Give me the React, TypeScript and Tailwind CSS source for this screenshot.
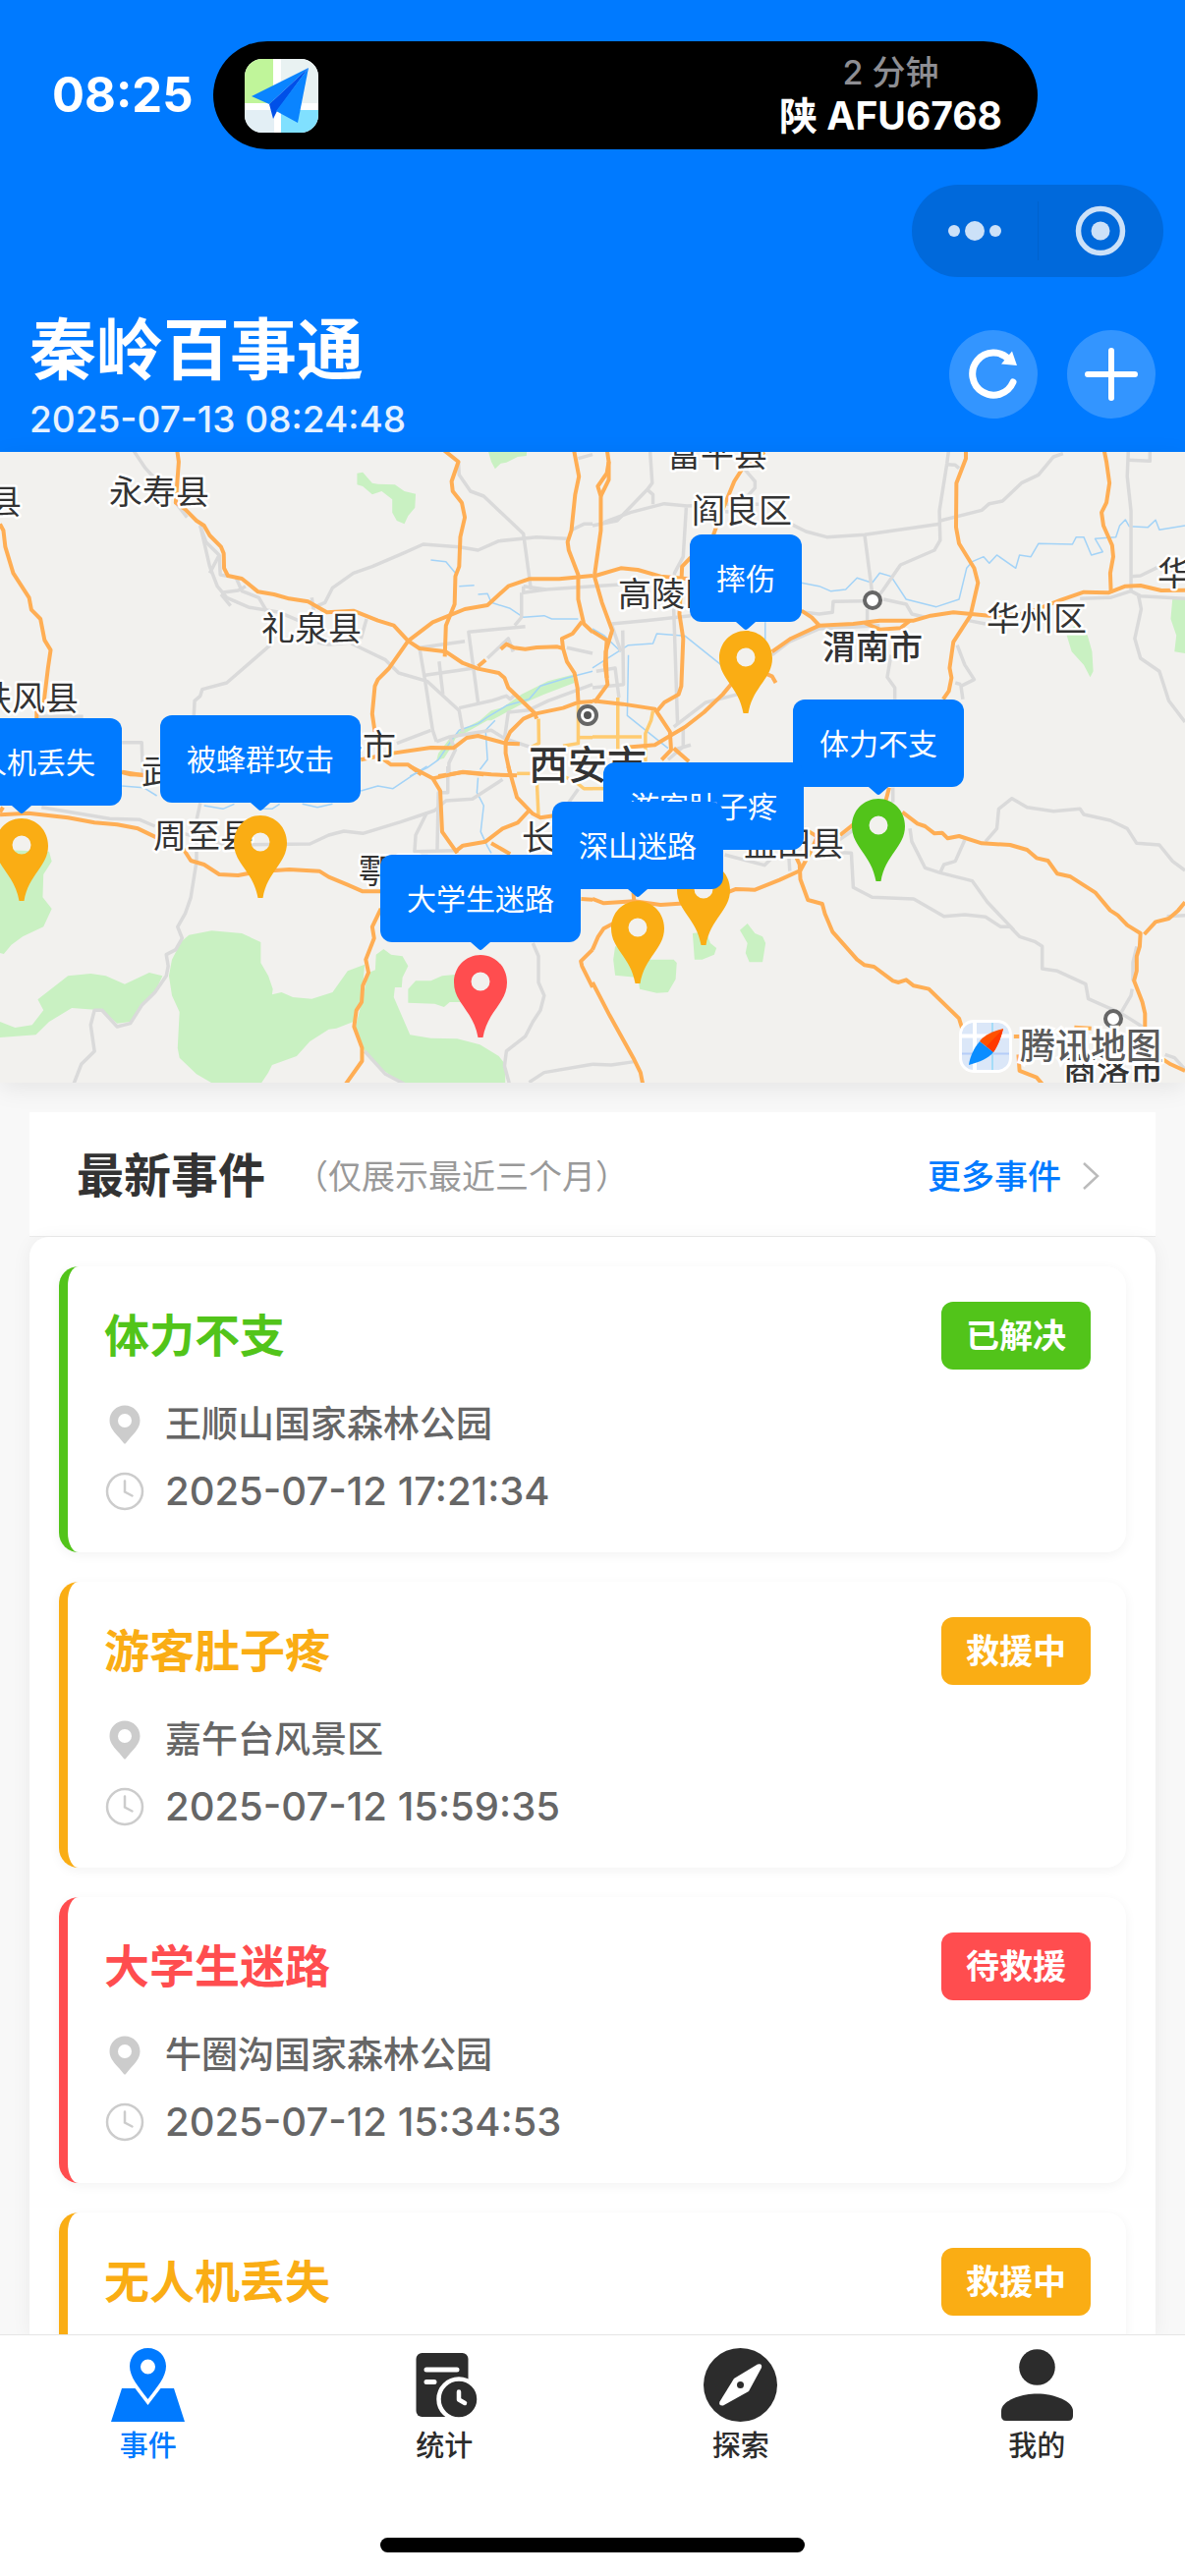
import { useState } from 'react';
import type { ReactNode } from 'react';

type Status = 'solved' | 'rescuing' | 'waiting';

interface RescueEvent {
    title: string;
    place: string;
    time: string;
    status: Status;
}

interface Marker {
    title: string;
    x: number;
    y: number;
    gap: number;
    color: string;
}

interface Tile {
    x: number;
    y: number;
    parks: string[];
    water: string[];
    minor: string[];
    streets: string[];
    highways: string[];
}

const STATUS: Record<Status, { label: string; text: string; bg: string; border: string }> = {
    solved: { label: '已解决', text: 'text-[#52c41a]', bg: 'bg-[#52c41a]', border: 'border-[#52c41a]' },
    rescuing: { label: '救援中', text: 'text-[#faad14]', bg: 'bg-[#faad14]', border: 'border-[#faad14]' },
    waiting: { label: '待救援', text: 'text-[#ff4d4f]', bg: 'bg-[#ff4d4f]', border: 'border-[#ff4d4f]' },
};

const EVENTS: RescueEvent[] = [
    { title: '体力不支', place: '王顺山国家森林公园', time: '2025-07-12 17:21:34', status: 'solved' },
    { title: '游客肚子疼', place: '嘉午台风景区', time: '2025-07-12 15:59:35', status: 'rescuing' },
    { title: '大学生迷路', place: '牛圈沟国家森林公园', time: '2025-07-12 15:34:53', status: 'waiting' },
    { title: '无人机丢失', place: '太白山国家森林公园', time: '2025-07-12 14:20:16', status: 'rescuing' },
];

// x is measured from the map centre, y from its top edge, gap is callout to pin
const MARKERS: Marker[] = [
    { title: '摔伤', x: 156, y: 84, gap: 9, color: '#faad14' },
    { title: '体力不支', x: 291, y: 252, gap: 12, color: '#52c41a' },
    { title: '被蜂群攻击', x: -338, y: 268, gap: 13, color: '#faad14' },
    { title: '无人机丢失', x: -581, y: 271, gap: 13, color: '#faad14' },
    { title: '游客肚子疼', x: 113, y: 316, gap: 13, color: '#faad14' },
    { title: '深山迷路', x: 46, y: 356, gap: 12, color: '#faad14' },
    { title: '大学生迷路', x: -114, y: 410, gap: 13, color: '#ff4d4f' },
];

const PLACES = [
    { name: '永寿县', x: 162, y: 41 },
    { name: '彬县', x: -12, y: 51 },
    { name: '礼泉县', x: 317, y: 180 },
    { name: '扶风县', x: 29, y: 251 },
    { name: '武功县', x: 195, y: 326 },
    { name: '兴平市', x: 352, y: 300 },
    { name: '周至县', x: 207, y: 391 },
    { name: '鄠邑区', x: 416, y: 427 },
    { name: '长安区', x: 582, y: 393 },
    { name: '富平县', x: 730, y: 3 },
    { name: '阎良区', x: 755, y: 60 },
    { name: '高陵区', x: 680, y: 145 },
    { name: '华州区', x: 1055, y: 170 },
    { name: '华阴市', x: 1229, y: 124 },
    { name: '蓝田县', x: 808, y: 399 },
];

const TILES: Tile[] = [
    {
        x: 0,
        y: -10,
        parks: [
            '945,95 960,92 985,125 1000,128 1045,130 1070,150 1100,158 1098,200 1080,225 1070,250 1050,240 1038,215 1038,175 1010,150 985,160 960,135 945,130',
            '1290,20 1395,20 1393,42 1370,45 1340,62 1325,65 1310,82 1300,60',
            '1515,710 1450,730 1380,770 1330,810 1300,820 1270,850 1220,880 1190,905 1160,950 1155,972 1175,965 1195,930 1205,905 1290,850 1300,850 1380,800 1440,770 1520,735',
        ],
        water: [
            '1568,700 1500,720 1430,745 1400,785 1340,805 1290,840 1265,860 1215,880 1195,910 1160,970 1130,995 1085,1020',
            '1140,360 1180,365 1205,400', '1215,440 1255,437', '1265,465 1290,463 1300,490 1350,508 1385,535 1440,530 1460,540 1530,540',
            '1310,850 1285,880 1290,970 1270,1000',
        ],
        minor: [
            '350,20 385,80 405,105', '465,185 495,230', '530,255 545,305 580,345 555,400', '530,255 555,380 575,440 600,475 660,505 740,520 790,545',
            '585,460 630,453 650,440', '585,465 610,500', '625,415 640,455 685,475 705,515', '825,475 830,515', '580,345 583,405 605,410',
            '840,500 860,490 880,445 935,400 985,380 1070,338 1120,312 1215,320 1265,330 1320,302 1420,290 1500,295',
            '1213,60 1215,100 1245,150 1280,165 1385,280 1405,450',
            '1385,440 1385,460 1445,450 1568,440', '1385,440 1445,450', '1380,460 1380,535 1362,560', '1390,563 1240,580 1265,795',
            '1110,628 1230,608', '1110,628 1125,730 1145,880 1155,915', '1162,670 1172,770', '930,615 1020,665 1055,705 1130,730 1215,820 1225,885',
            '1125,712 1255,690', '970,540 955,600', '715,620 600,735 535,755 530,775 515,790 513,835', '840,612 870,618 930,612',
            '1215,812 1300,790 1340,775 1350,785 1365,770', '1568,740 1450,790 1400,818 1345,825 1335,905', '1050,920 1140,880',
            '1155,915 1190,900 1300,880 1335,905 1400,930', '1190,900 1205,940 1188,980 1188,1020', '1530,50 1568,38',
            '1568,250 1545,250 1510,270', '1500,628 1568,645', '323,917 375,917 378,1015', '100,838 220,838', '1290,660 1345,600 1358,640',
        ],
        streets: ['1425,845 1426,920 1400,935', '1530,795 1530,920 1490,928', '1530,902 1568,902'],
        highways: [
            '468,20 473,60 465,185 490,205 520,240 540,255 555,285 585,320 592,340 593,385 603,408 640,417 683,457 725,465 765,478 815,487 865,520 935,515 1000,545 1042,560 1080,607 1110,630 1180,640 1225,675 1265,692 1320,705 1335,720 1345,750 1415,828 1420,845',
            '0,250 9,270 14,320 35,400 77,475 83,512 107,540 118,605 134,635 127,690 117,785 97,820 97,845',
            '1175,25 1213,60 1195,120 1198,150 1222,185 1230,230 1218,290 1215,380 1205,410 1203,495 1180,560 1177,655',
            '1518,20 1532,105 1522,160 1512,270 1502,305 1505,330 1530,405 1530,480 1545,555 1568,580',
            '1568,408 1480,418 1400,418 1345,440 1290,498 1230,510 1145,550 1080,607 1030,690 1000,725 992,745 985,830 992,885',
            '1265,685 1285,665', '1325,632 1340,617 1360,628 1390,632 1420,627 1475,625 1490,630 1500,670 1520,705 1528,750 1530,790',
            '1490,630 1487,600 1515,585 1540,548',
            '1568,792 1530,795 1490,812 1415,830 1385,845 1350,885 1338,915 1338,950 1350,1015',
            '955,970 1040,950 1140,933 1200,934 1235,903 1265,897 1338,920 1375,922',
            '1010,965 1035,985 1080,985 1115,1015', '1160,1020 1225,1008 1280,1015', '323,1008 345,1015 380,1016',
        ],
    },
    {
        x: 603,
        y: -10,
        parks: [
            '1255,590 1275,560 1310,590 1322,640 1325,700 1317,718 1300,680 1268,640',
            '1568,480 1535,475 1530,540 1545,590 1540,640 1568,645',
        ],
        water: [
            '553,430 600,440 630,455 670,450 700,415 740,430 760,400 790,410 830,480 910,503 970,480 990,385 1005,365 1035,350 1050,370 1070,345 1120,385 1130,345 1160,350 1180,310 1270,312 1280,290 1300,290 1320,345 1350,335 1330,295 1385,290 1395,255 1410,237 1420,257 1470,260 1490,238 1500,268 1568,255',
            '0,690 95,620 160,615 170,585 245,592 340,680', '95,650 92,835 200,935', '457,550 457,610', '0,570 30,590 75,640',
        ],
        minor: [
            '152,20 158,125 145,145 65,240 0,255', '145,145 160,160 160,190', '30,245 100,215 190,188 250,195 350,190 440,190',
            '248,200 240,350 217,400 215,510 225,860', '400,80 430,120 430,140 410,165 405,190', '350,212 410,215',
            '525,250 565,273 620,290 720,283 920,250', '943,20 938,65 918,210 920,300 905,330 815,375 770,450 750,480',
            '938,68 960,70 970,80', '1245,35 1220,45 1180,100 1135,125 1085,180 1050,188 1030,208 920,240', '720,283 740,460',
            '0,440 75,435', '50,555 140,545 260,530', '560,520 600,525 635,520 637,487 720,485', '727,510 727,545',
            '770,480 830,495 845,525 880,535', '475,650 520,610 600,570 760,560', '790,650 780,718 800,750 800,785',
            '965,620 985,680 1010,725 975,745 980,785', '975,740 960,735', '995,545 1040,555', '50,555 75,640',
            '1418,20 1415,105 1425,210 1425,455', '1418,55 1475,58 1475,20', '1425,410 1450,408 1500,380',
            '1290,478 1370,475 1425,455 1450,470 1568,478', '1445,470 1452,510 1435,600 1450,660 1500,700 1525,790 1568,855',
            '80,575 82,740 0,750', '10,700 60,690 70,780', '385,770 300,795 215,870', '240,870 240,930 200,970', '215,940 260,925',
        ],
        streets: ['67,780 67,940', '0,900 130,900', '160,820 155,850 140,890 140,975'],
        highways: [
            '38,20 43,60 38,95 14,135 22,165 22,270 8,385 5,410 25,490 52,575 35,640 38,720', '43,60 43,115 22,165',
            '8,408 75,385 120,390 180,410 255,418', '455,30 400,75 375,120 345,205 320,283',
            '0,578 38,605 33,680 40,740 5,795', '0,790 80,800 165,815 205,885 208,940 183,970',
            '260,352 237,380 235,430 230,525 240,600 235,745 228,770 190,795 172,820',
            '553,515 580,535 600,560 690,555 760,545 850,545 895,530 955,520 1050,530 1145,525',
            '600,560 525,600 475,640', '370,735 345,770 295,825 245,870 205,897 165,925 80,933',
            '720,552 760,572 815,568 840,545', '460,708 475,715 485,735',
            '988,20 988,50 963,125 962,260 970,310 1010,385 1020,430 1000,530 955,610 945,690 950,720 943,760 928,785',
            '1353,20 1360,60 1368,125 1360,185 1347,215 1352,255 1375,315 1378,350 1370,400 1372,460',
            '1145,525 1240,482 1300,458 1365,460 1410,440 1450,438 1505,453 1568,452', '215,935 255,975',
        ],
    },
    {
        x: 0,
        y: 320,
        parks: [
            '0,255 130,260 137,290 115,330 113,400 137,435 115,490 60,520 30,545 10,573 0,570',
            '0,780 40,798 85,790 115,745 100,712 130,685 180,640 240,633 280,640 330,665 395,630 430,640 410,690 375,730 345,780 310,785 270,745 190,738 130,780 95,820 0,828',
            '480,535 500,515 560,502 640,510 690,537 690,600 710,640 722,680 720,697 745,690 775,705 825,710 880,690 920,625 965,605 960,670 957,720 943,745 935,780 890,800 870,803 820,840 785,885 720,912 710,935 690,970 565,970 520,940 475,890 470,860 475,750 455,700 447,640 455,590',
            '995,575 1015,558 1035,575 1065,580 1080,610 1065,645 1063,675 1045,675 1042,705 1085,820 1140,830 1210,832 1270,850 1320,885 1337,910 1337,970 1065,970 1010,925 965,870 940,800 957,720 975,630 993,622',
            '1080,680 1100,655 1140,655 1170,640 1210,635 1220,720 1190,720 1175,735 1150,725 1080,722',
        ],
        water: ['323,60 380,65 415,90', '540,120 590,130 620,115', '690,130 720,130 740,115', '800,115 840,125 880,115', '955,75 1000,60 1040,68 1095,25 1130,0', '1265,35 1262,80 1280,120 1272,200 1290,245 1300,265'],
        minor: [
            '110,125 290,160 370,163 410,183', '530,112 520,165 520,290 505,400 490,450 470,490 482,525 465,560 440,575 445,610 440,640 410,690 375,730 345,785 310,795 270,745 250,745 240,790 250,870 215,910 195,970',
            '485,205 600,240 820,237 870,210 910,198 960,205 1060,170 1150,135 1180,105 1250,100 1330,40',
            '1185,0 1185,80 1160,80 1157,255', '1130,140 1100,210 1097,260 1205,257',
            '1410,540 1425,580 1425,660 1440,700 1430,745 1410,780 1390,825 1340,870 1335,915 1348,970', '1400,965 1440,935 1568,910', '965,870 1020,940 1070,970', '1530,70 1505,110',
        ],
        streets: ['1368,22 1405,22', '1420,30 1425,155', '1490,30 1520,45 1545,68 1568,68'],
        highways: [
            '0,148 75,143 180,157 250,172 310,178 365,190 415,218', '0,140 8,125', '485,252 505,288 540,300 580,330 630,333 680,322 765,315 845,320 870,338 920,362 960,382 1008,382',
            '323,17 380,28', '1085,0 1145,37 1165,75 1170,200 1210,265', '1145,37 1225,17 1300,25 1368,28', '1345,0 1368,95 1410,145 1430,157 1470,150',
            '1205,260 1225,242 1285,230 1330,190 1370,172 1400,135', '1300,235 1350,268',
            '1008,435 985,490 990,525 968,590 975,630 960,670 957,720 943,745 937,795 958,860 958,900 915,970',
            '1538,405 1568,407', '1568,560 1537,595 1540,610 1568,675',
        ],
    },
    {
        x: 603,
        y: 320,
        parks: [
            '265,510 300,505 312,540 328,555 322,575 290,590 270,590',
            '390,500 410,480 430,510 450,520 458,540 450,598 415,598 405,570 410,540',
            '60,550 80,550 100,590 215,590 223,600 220,650 200,690 170,692 125,680 120,645 60,638 55,590',
        ],
        water: [],
        minor: [
            '350,270 455,302 475,280', '640,235 690,195', '630,262 685,265 690,370 740,400 850,405 930,458 985,453 1040,460 1080,490 1105,490 1130,520 1170,535 1190,550 1190,618 1230,625 1305,665 1312,710 1400,755 1455,795',
            '840,190 845,230 880,310 920,325 1005,350 1045,415 1115,500', '920,325 930,300 960,290 985,225',
            '1040,230 1070,190 1075,130 1110,98 1150,125 1220,137 1290,130 1300,147 1370,165 1415,190 1440,235 1500,240 1535,290 1568,318',
            '1440,550 1430,600 1430,655', '1428,680 1425,700 1400,750', '0,910 50,912 110,902', '1515,880 1540,890 1568,925', '1520,458 1568,455', '795,65 795,110', '520,280 522,320',
        ],
        streets: ['0,68 30,68'],
        highways: [
            '0,405 30,418 110,412 180,423 290,415 380,375 430,377 495,347 550,318 575,265 595,215', '110,412 108,385', '655,210 690,178', '785,65 775,110',
            '820,140 860,175 880,183 905,205 925,203 940,220 970,213 1030,235 1105,240 1150,255 1175,280 1205,288 1230,328 1265,337 1330,385 1370,440 1390,455 1415,485 1450,510 1448,550 1440,580 1440,625 1433,655 1455,720 1462,755 1462,795',
            '1460,513 1490,475 1525,465 1550,440 1568,415',
            '540,280 548,300 550,345 570,408 608,420 615,450 635,505 700,590 720,607 745,612 795,655 810,660 830,652 850,670 890,680 970,770 978,800',
            '1115,825 1130,825', '1127,880 1130,930 1175,950 1190,970', '0,560 15,520 30,495 55,480', '0,660 45,760 110,895 127,935 133,970',
            '1275,797 1320,800', '1510,895 1530,910 1568,930', '560,190 595,215',
        ],
    },
];

function Lines({ lines, color, width }: { lines: string[]; color: string; width: number }) {
    return (
        <>
            {lines.map((points) => (
                <polyline
                    key={points}
                    points={points}
                    fill="none"
                    stroke={color}
                    strokeWidth={width}
                    strokeLinejoin="round"
                    vectorEffect="non-scaling-stroke"
                />
            ))}
        </>
    );
}

function MapCanvas() {
    return (
        <svg
            className="h-full w-full"
            viewBox="0 0 1206 642"
            preserveAspectRatio="xMidYMid slice"
            aria-hidden="true"
        >
            <rect width="1206" height="642" fill="#f2f1ee" />
            {TILES.map((tile) => (
                <g key={`${tile.x}-${tile.y}`} transform={`translate(${tile.x} ${tile.y}) scale(0.3846 0.3333)`}>
                    {tile.parks.map((points) => (
                        <polygon key={points} points={points} fill="#c9f1c2" />
                    ))}
                    <Lines lines={tile.water} color="#a3d3f7" width={1.5} />
                    <Lines lines={tile.minor} color="#dadada" width={3.5} />
                    <Lines lines={tile.streets} color="#ffcb70" width={3.5} />
                    <Lines lines={tile.highways} color="#ffae54" width={4} />
                </g>
            ))}
            <g fill="#333" stroke="#fff" strokeWidth="5" strokeLinejoin="round" paintOrder="stroke" textAnchor="middle">
                {PLACES.map((place) => (
                    <text key={place.name} x={place.x} y={place.y + 12} fontSize="34">
                        {place.name}
                    </text>
                ))}
                <text x="888" y="211" fontSize="34" fontWeight="500">渭南市</text>
                <text x="1133" y="642" fontSize="34" fontWeight="500">商洛市</text>
                <text x="598" y="333" fontSize="40" fontWeight="500">西安市</text>
            </g>
            <g fill="#fff" stroke="#666" strokeWidth="4">
                <circle cx="888" cy="151" r="8" />
                <circle cx="1133" cy="577" r="8" />
                <circle cx="598" cy="268" r="9" />
            </g>
            <circle cx="598" cy="268" r="4" fill="#555" />
        </svg>
    );
}

function MapMarker({ marker }: { marker: Marker }) {
    return (
        <button
            type="button"
            className="absolute flex -translate-x-1/2 flex-col items-center"
            style={{ left: `calc(50% + ${marker.x}px)`, top: marker.y }}
        >
            <span className="rounded-xl bg-[#007aff] px-[27px] pt-[25px] pb-[23px] text-[30px] leading-[41px] whitespace-nowrap text-white">
                {marker.title}
            </span>
            <span className="flex" style={{ height: marker.gap }}>
                <svg className="h-2 w-5" viewBox="0 0 20 8" fill="#007aff" aria-hidden="true">
                    <path d="M0 0h20l-8 7q-2 2-4 0z" />
                </svg>
            </span>
            <svg className="h-[84px] w-[54px]" viewBox="0 0 54 84" fill={marker.color} aria-hidden="true">
                <path
                    fillRule="evenodd"
                    d="M27 0C12 0 0 12 0 28c0 21 20 29 24.500 56h5C34 57 54 49 54 28 54 12 42 0 27 0zm0 17.500a9.500 9.500 0 1 0 0 19 9.500 9.500 0 0 0 0-19z"
                />
            </svg>
        </button>
    );
}

function MapLogo() {
    return (
        <div className="absolute right-6 bottom-2.5 flex items-center gap-2">
            <svg className="size-[54px]" viewBox="0 0 54 54" aria-hidden="true">
                <rect width="54" height="54" rx="15" fill="#fff" />
                <rect x="3" y="3" width="48" height="48" rx="12" fill="#dbe7f8" />
                <path d="M16 3v48M3 16.500h48" stroke="#fff" strokeWidth="4" />
                <path d="M3 34.500h48" stroke="#b5cdf8" strokeWidth="2" />
                <path d="M34 3v48" stroke="#a5dcf8" strokeWidth="2" />
                <path d="M45 9C33 12 24 17 21 22l14 11c5-7 8-16 10-24z" fill="#ff5200" />
                <path d="M21 22C15 29 11 38 10 46c11-3 20-7 25-13z" fill="#0a8dff" />
                <path d="M45 9 28 27l7 6c5-7 8-16 10-24z" fill="#ff3a00" />
            </svg>
            <span className="text-4xl leading-[54px] font-medium text-[#5a5a5a] [-webkit-text-stroke:6px_#fff] [paint-order:stroke_fill]">
                腾讯地图
            </span>
        </div>
    );
}

function NavigationAppIcon() {
    return (
        <svg className="size-[75px] rounded-[18px]" viewBox="0 0 75 75" aria-hidden="true">
            <rect width="75" height="75" fill="#fff" />
            <path d="M0 0h29v45H0z" fill="#c0f59a" />
            <path d="M37 0h38v45H37z" fill="#e9f2f2" />
            <path d="M0 52h30v23H0z" fill="#e3eff5" />
            <path d="M37 52h38v23H37z" fill="#80e0ff" />
            <path d="M65 9 7 38l18 8z" fill="#0a84ff" />
            <path d="M65 9 25 46l4 15 4-8z" fill="#0050e8" />
            <path d="M65 9 32 53l22 12z" fill="#0a84ff" />
        </svg>
    );
}

function EventCard({ event }: { event: RescueEvent }) {
    const status = STATUS[event.status];
    return (
        <li
            className={`rounded-[20px] border-l-[9px] bg-white pt-9 pr-9 pb-7 pl-[37px] shadow-[0_3px_12px_rgba(0,0,0,0.05)] ${status.border}`}
        >
            <div className="flex items-center justify-between">
                <h3 className={`text-[46px] leading-[69px] font-bold ${status.text}`}>{event.title}</h3>
                <span className={`rounded-xl px-[25px] text-[34px] leading-[69px] font-bold text-white ${status.bg}`}>
                    {status.label}
                </span>
            </div>
            <p className="mt-[22px] flex items-center gap-5 text-[37px] leading-[68px] font-medium text-[#666]">
                <svg className="size-[42px]" viewBox="-1.500 -1.500 42 42" fill="#ccc" aria-hidden="true">
                    <path
                        fillRule="evenodd"
                        d="M19.500 0C11 0 4 6.500 4 15.500c0 7 5 12 10 17.500l4.500 5.500q1 1 2 0L25 33c5-5.500 10-10.500 10-17.500C35 6.500 28 0 19.500 0zm0 8.500a7 7 0 1 0 0 14 7 7 0 0 0 0-14z"
                    />
                </svg>
                {event.place}
            </p>
            <p className="flex items-center gap-5 text-[40px] leading-[68px] font-medium text-[#666]">
                <svg
                    className="size-[42px]"
                    viewBox="-1.500 -1.500 42 42"
                    fill="none"
                    stroke="#ccc"
                    strokeWidth="2.5"
                    strokeLinecap="round"
                    aria-hidden="true"
                >
                    <circle cx="19.500" cy="19.500" r="18" />
                    <path d="M19.500 9v11l7.500 4" />
                </svg>
                {event.time}
            </p>
        </li>
    );
}

const TABS: { label: string; icon: ReactNode }[] = [
    {
        label: '事件',
        icon: (
            <>
                <path
                    fillRule="evenodd"
                    d="M37.500 0C27 0 19 8 19 18.500c0 11 9 21 18.500 33.500C47 39.500 56 29.500 56 18.500 56 8 48 0 37.500 0zm0 11.500a7.500 7.500 0 1 1 0 15 7.500 7.500 0 0 1 0-15z"
                />
                <path d="M11 41h13.500l13 17 13-17H64l11 34H0z" />
            </>
        ),
    },
    {
        label: '统计',
        icon: (
            <>
                <rect x="8.500" y="5" width="53" height="65" rx="6" />
                <path d="M19 22h31M19 34.500h8" stroke="#fff" strokeWidth="5" strokeLinecap="round" />
                <circle cx="52" cy="52" r="20.500" stroke="#fff" strokeWidth="4.500" />
                <path d="M52 44.500v8l6 3.500" fill="none" stroke="#fff" strokeWidth="4.500" strokeLinecap="round" strokeLinejoin="round" />
            </>
        ),
    },
    {
        label: '探索',
        icon: (
            <>
                <circle cx="37.500" cy="37.500" r="37.500" />
                <path d="M55 16.500q5-1.500 4 3.500L46 44 20 58.500q-5 .5-3.500-4L31 31z" fill="#fff" />
                <circle cx="37.500" cy="37.500" r="3.500" />
            </>
        ),
    },
    {
        label: '我的',
        icon: (
            <>
                <circle cx="37.500" cy="19.500" r="18.300" />
                <path d="M37.500 46.500C55 46.500 74 54 74 64v5q0 5-5 5H6q-5 0-5-5v-5c0-10 19-17.500 36.500-17.500z" />
            </>
        ),
    },
];

export default function App() {
    const [activeTab, setActiveTab] = useState('事件');

    return (
        <div className="flex h-screen flex-col bg-[#f8f8f8] font-[Inter,'Noto_Sans_CJK_SC',sans-serif]">
            <header className="flex shrink-0 flex-col bg-[#007aff] pt-[42px] pb-2 text-white">
                {/* 状态栏 */}
                <div className="flex items-center pr-[150px]">
                    <span className="w-[217px] pl-[53px] text-[49px] leading-[56px] font-bold">08:25</span>
                    <div className="flex h-[110px] flex-1 items-center justify-between rounded-full bg-black pr-9 pl-8">
                        <NavigationAppIcon />
                        <div className="text-center">
                            <p className="text-[34px] leading-[42px] font-medium text-[#8e8e93]">2 分钟</p>
                            <p className="text-[39px] leading-[46px] font-bold">陕 AFU6768</p>
                        </div>
                    </div>
                </div>

                {/* 小程序胶囊按钮 */}
                <div className="mt-9 mr-[22px] flex h-[94px] w-64 items-center self-end rounded-full bg-[#0069db]">
                    <button type="button" aria-label="更多" className="flex h-[60px] flex-1 items-center justify-center border-r border-[#0062cc]">
                        <svg className="h-5 w-14" viewBox="0 0 56 20" fill="#cce1f8" aria-hidden="true">
                            <circle cx="7" cy="10" r="6" />
                            <circle cx="28" cy="10" r="10" />
                            <circle cx="49" cy="10" r="6" />
                        </svg>
                    </button>
                    <button type="button" aria-label="关闭" className="flex h-[60px] flex-1 items-center justify-center">
                        <svg className="size-[52px]" viewBox="0 0 52 52" fill="none" stroke="#cce1f8" strokeWidth="5.5" aria-hidden="true">
                            <circle cx="26" cy="26" r="22.500" />
                            <circle cx="26" cy="26" r="9.500" fill="#cce1f8" stroke="none" />
                        </svg>
                    </button>
                </div>

                <div className="mt-7 flex items-center justify-between pr-[30px] pl-[30px]">
                    <div>
                        <h1 className="text-[68px] leading-[92px] font-bold">秦岭百事通</h1>
                        <p className="text-[37px] leading-[50px] font-medium text-white/90">2025-07-13 08:24:48</p>
                    </div>
                    <div className="flex gap-[30px]">
                        <button type="button" aria-label="刷新" className="flex size-[90px] items-center justify-center rounded-full bg-[#3395ff]">
                            <svg className="size-[90px]" viewBox="0 0 90 90" fill="none" aria-hidden="true">
                                <path d="M65 53A21.500 21.500 0 1 1 61 30" stroke="#fff" strokeWidth="7" strokeLinecap="round" />
                                <path d="M64 21.500 69 36 53 34.500z" fill="#fff" />
                            </svg>
                        </button>
                        <button type="button" aria-label="新增" className="flex size-[90px] items-center justify-center rounded-full bg-[#3395ff]">
                            <svg className="size-[54px]" viewBox="0 0 54 54" stroke="#fff" strokeWidth="6" strokeLinecap="round" aria-hidden="true">
                                <path d="M27 3v48M3 27h48" />
                            </svg>
                        </button>
                    </div>
                </div>
            </header>

            {/* 地图 */}
            <section aria-label="地图" className="relative h-[642px] shrink-0 shadow-[0_6px_24px_rgba(0,0,0,0.08)]">
                <div className="absolute inset-0 overflow-hidden">
                    <MapCanvas />
                    {MARKERS.map((marker) => (
                        <MapMarker key={marker.title} marker={marker} />
                    ))}
                    <MapLogo />
                </div>
            </section>

            {/* 事件列表 */}
            <main className="flex min-h-0 flex-1 flex-col px-[30px] pt-[30px]">
                <div className="flex items-center border-b border-[#ebebeb] bg-white pt-[31px] pr-14 pb-[27px] pl-12">
                    <h2 className="text-5xl leading-[68px] font-bold text-[#333]">最新事件</h2>
                    <span className="ml-[30px] text-[34px] text-[#999]">（仅展示最近三个月）</span>
                    <a href="#events" className="ml-auto flex items-center gap-5 text-[34px] font-medium text-[#007aff]">
                        更多事件
                        <svg className="h-7 w-5" viewBox="0 0 20 28" fill="none" stroke="#bbb" strokeWidth="2.5" aria-hidden="true">
                            <path d="M3 1l14 13L3 27" />
                        </svg>
                    </a>
                </div>
                <ul className="flex min-h-0 flex-1 flex-col gap-[30px] overflow-y-auto rounded-t-[20px] bg-white p-[30px] shadow-[0_3px_20px_rgba(0,0,0,0.06)] [scrollbar-width:none] [&>li]:shrink-0">
                    {EVENTS.map((event) => (
                        <EventCard key={event.title} event={event} />
                    ))}
                </ul>
            </main>

            <nav className="relative flex shrink-0 flex-col items-center border-t border-[#e5e5e5] bg-white pb-6">
                <div className="flex w-full pt-[13px]">
                    {TABS.map((tab) => (
                        <button
                            key={tab.label}
                            type="button"
                            onClick={() => setActiveTab(tab.label)}
                            className={`flex flex-1 flex-col items-center gap-1 text-[29px] leading-[42px] font-medium ${
                                tab.label === activeTab ? 'text-[#007aff]' : 'text-[#2c2c2c]'
                            }`}
                        >
                            <svg className="size-[75px]" viewBox="0 0 75 75" fill="currentColor" aria-hidden="true">
                                {tab.icon}
                            </svg>
                            {tab.label}
                        </button>
                    ))}
                </div>
                <div className="mt-[72px] h-[15px] w-[432px] rounded-full bg-black" />
            </nav>
        </div>
    );
}
